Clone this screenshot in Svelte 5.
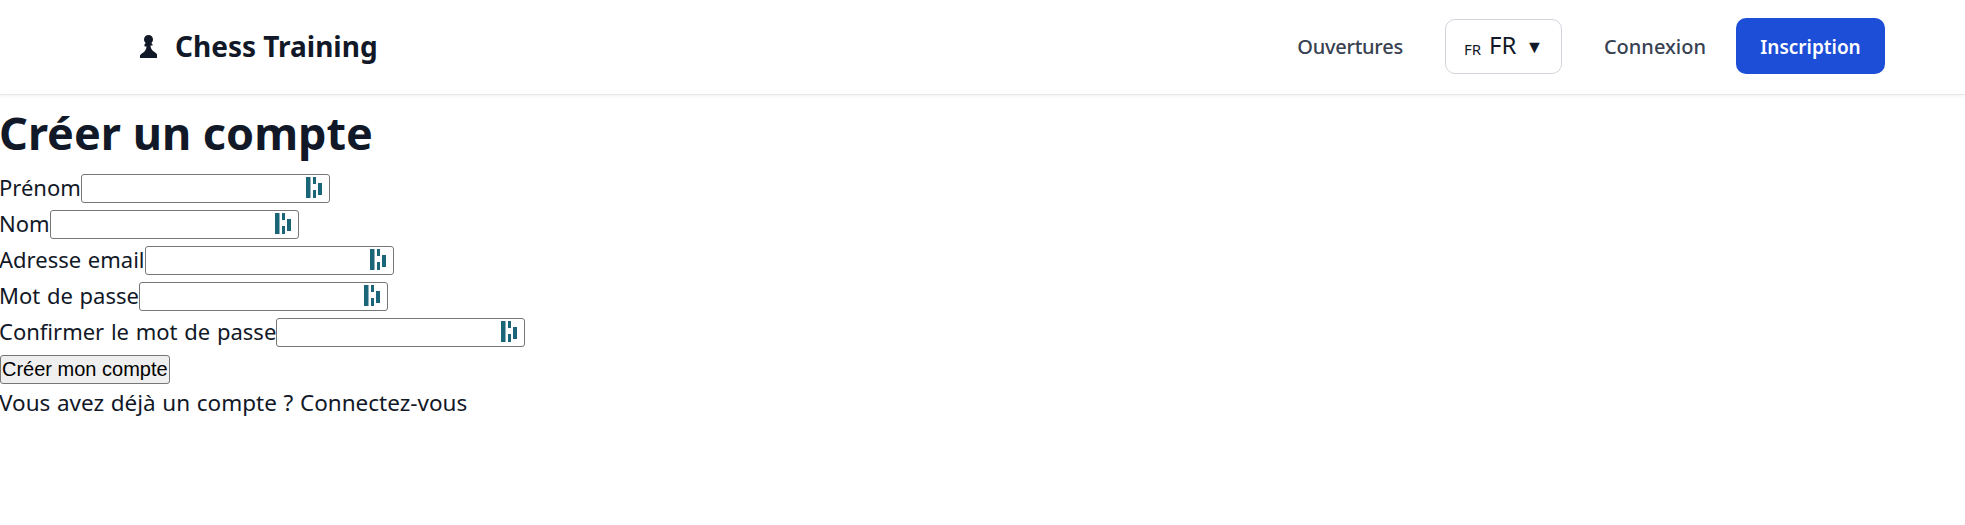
<script>
  const fields = [
    { id: 'firstName', label: 'Prénom', type: 'text' },
    { id: 'lastName', label: 'Nom', type: 'text' },
    { id: 'email', label: 'Adresse email', type: 'email' },
    { id: 'password', label: 'Mot de passe', type: 'password' },
    { id: 'confirm', label: 'Confirmer le mot de passe', type: 'password' }
  ]
</script>

<nav class="navbar">
  <a class="brand" href="#home">
    <svg class="pawn" viewBox="0 0 17 23" aria-hidden="true">
      <path d="M8.500 0C11.100 0 13 2 13 4.400c0 1.500-.7 2.800-1.800 3.600l1.300 1.200v1.300h-2c.1 2.500 1 4.300 3.200 5.900 1.700 1.200 2.800 1.900 3.300 3V23H0v-2.600c.5-1.100 1.600-1.800 3.300-3 2.200-1.600 3.100-3.400 3.200-5.900h-2V9.200L5.800 8C4.700 7.200 4 5.900 4 4.400 4 2 5.900 0 8.500 0z" />
    </svg>
    <span>Chess Training</span>
  </a>
  <div class="nav-right">
    <a class="nav-link openings" href="#openings">Ouvertures</a>
    <button class="lang"><span class="flag">FR</span><span class="code">FR</span><span class="caret">▼</span></button>
    <a class="nav-link" href="#login">Connexion</a>
    <a class="signup" href="#signup">Inscription</a>
  </div>
</nav>

<main>
  <h1>Créer un compte</h1>
  <form>
    {#each fields as field}
      <div class="row">
        <label for={field.id}>{field.label}</label>
        <span class="input-wrap">
          <input id={field.id} type={field.type} />
          <svg class="pm-icon" viewBox="0 0 16 22" aria-hidden="true">
            <path d="M0 0h4.500v21H0zM7 0h3v7H7zM7 13h3v8H7zM12 6h4v12h-4z" />
          </svg>
        </span>
      </div>
    {/each}
    <button class="submit" type="submit">Créer mon compte</button>
  </form>
  <p>Vous avez déjà un compte ? <a href="#login">Connectez-vous</a></p>
</main>

<style>
  :global(body) {
    background: #fff;
    color: #111827;
    font-family: "Noto Sans", "Open Sans", sans-serif;
    font-size: 22.5px;
    line-height: 36px;
  }
  a {
    color: inherit;
    text-decoration: none;
  }
  .navbar {
    box-sizing: border-box;
    display: flex;
    align-items: center;
    justify-content: space-between;
    height: 95px;
    padding: 0 80px 2px 140px;
    border-bottom: 1px solid #e5e7eb;
    box-shadow: 0 1px 3px rgba(0, 0, 0, 0.06);
  }
  .brand {
    display: flex;
    align-items: center;
    gap: 18px;
    font-size: 28px;
    font-weight: 700;
  }
  .pawn {
    width: 17px;
    height: 23px;
    fill: #111827;
  }
  .nav-right {
    display: flex;
    align-items: center;
  }
  .nav-link {
    padding-top: 2px;
    font-size: 20px;
    font-weight: 500;
    color: #374151;
  }
  .openings {
    letter-spacing: -0.25px;
  }
  .lang {
    box-sizing: border-box;
    display: flex;
    align-items: center;
    height: 55px;
    width: 117px;
    margin: 0 42px;
    padding: 0 0 0 18px;
    background: #fff;
    border: 1px solid #d1d5db;
    border-radius: 10px;
    color: #111827;
    font-family: inherit;
  }
  .flag {
    font-size: 15px;
    margin-top: 5px;
  }
  .code {
    font-size: 24px;
    margin-top: -3px;
    margin-left: 8px;
  }
  .caret {
    font-size: 18px;
    margin-left: 9px;
  }
  .signup {
    display: flex;
    align-items: center;
    justify-content: center;
    width: 149px;
    height: 56px;
    margin-left: 30px;
    padding-top: 1px;
    box-sizing: border-box;
    background: #1d4ed8;
    border-radius: 10px;
    color: #fff;
    font-size: 19px;
    font-weight: 600;
  }
  h1 {
    box-sizing: border-box;
    height: 75px;
    margin: 0 0 0 -1px;
    font-size: 45px;
    font-weight: 700;
    line-height: 76px;
  }
  .row {
    height: 36px;
    display: flex;
    align-items: center;
  }
  label {
    margin: 0 0 2px -1px;
    font-size: 22px;
    word-spacing: 1px;
  }
  .input-wrap {
    position: relative;
    display: block;
    width: 249px;
    height: 29px;
  }
  input {
    box-sizing: border-box;
    display: block;
    width: 100%;
    height: 100%;
    padding: 1px 2px;
    background: #fff;
    border: 1px solid #767676;
    border-radius: 3px;
  }
  .pm-icon {
    position: absolute;
    top: 3px;
    right: 8px;
    width: 16px;
    height: 22px;
    fill: #1a6577;
  }
  .submit {
    display: block;
    height: 29px;
    margin-top: 5px;
    padding: 0 1px;
    background: #efefef;
    border: 1px solid #767676;
    border-radius: 3px;
    color: #000;
    font-family: "Liberation Sans", Arial, sans-serif;
    font-size: 20px;
    line-height: 27px;
  }
  p {
    margin: 1px 0 0 -1px;
    word-spacing: 0.8px;
  }
</style>
